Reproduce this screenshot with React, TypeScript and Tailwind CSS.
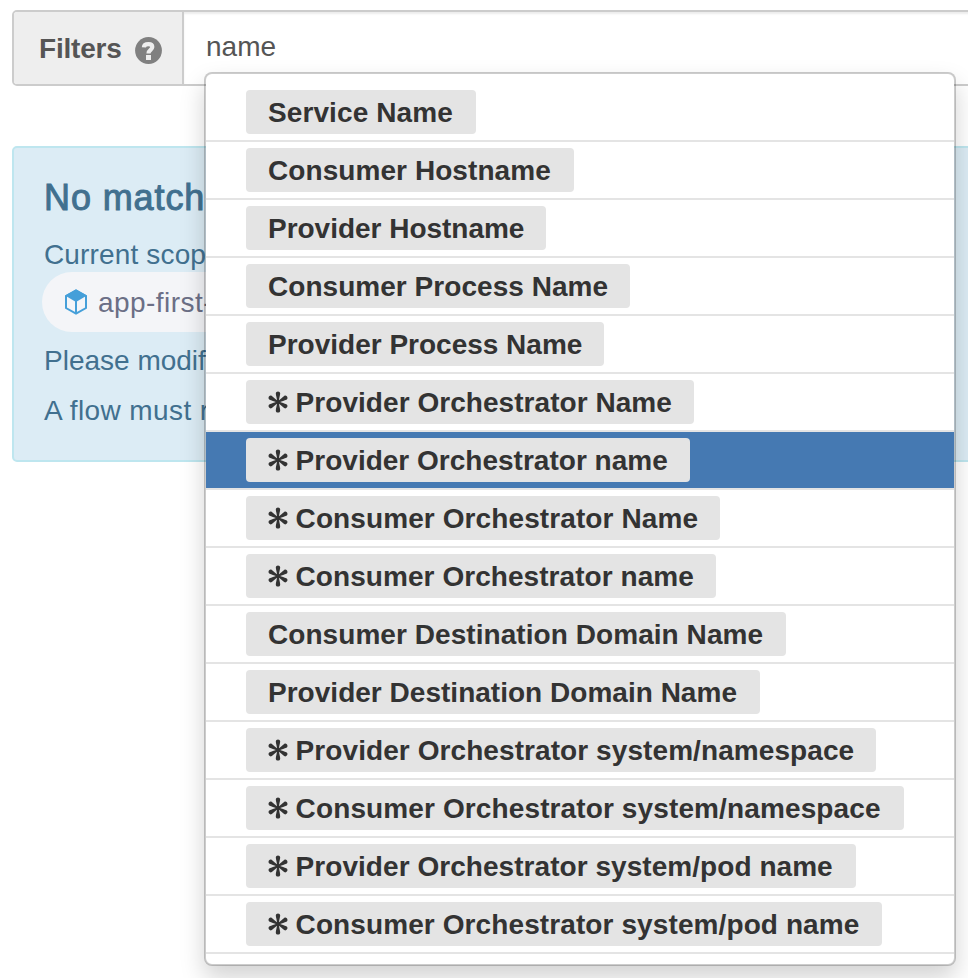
type Option = { label: string; starred?: boolean; active?: boolean; size: string };

const options: Option[] = [
  { label: 'Service Name', size: 'w-[230px] tracking-[0.1px]' },
  { label: 'Consumer Hostname', size: 'w-[328px] tracking-[0.07px]' },
  { label: 'Provider Hostname', size: 'w-[300px] tracking-[-0.02px]' },
  { label: 'Consumer Process Name', size: 'w-[384px] tracking-[0.04px]' },
  { label: 'Provider Process Name', size: 'w-[358px] tracking-[0px]' },
  { label: 'Provider Orchestrator Name', starred: true, size: 'w-[448px] tracking-[0.05px]' },
  { label: 'Provider Orchestrator name', starred: true, active: true, size: 'w-[444px] tracking-[0.01px]' },
  { label: 'Consumer Orchestrator Name', starred: true, size: 'w-[474px] tracking-[0.1px]' },
  { label: 'Consumer Orchestrator name', starred: true, size: 'w-[470px] tracking-[0.06px]' },
  { label: 'Consumer Destination Domain Name', size: 'w-[540px] tracking-[0.06px]' },
  { label: 'Provider Destination Domain Name', size: 'w-[514px] tracking-[0.02px]' },
  { label: 'Provider Orchestrator system/namespace', starred: true, size: 'w-[630px] tracking-[0.08px]' },
  { label: 'Consumer Orchestrator system/namespace', starred: true, size: 'w-[658px] tracking-[0.12px]' },
  { label: 'Provider Orchestrator system/pod name', starred: true, size: 'w-[610px] tracking-[0.05px]' },
  { label: 'Consumer Orchestrator system/pod name', starred: true, size: 'w-[636px] tracking-[0.1px]' },
];

function Asterisk() {
  return (
    <svg className="-mt-[2px] mr-[7.6px] h-[22px] w-5 shrink-0" viewBox="0 0 20 22" fill="#333">
      {[0, 60, 120, 180, 240, 300].map((angle) => (
        <path
          key={angle}
          transform={`rotate(${angle} 10 11)`}
          d="M9.1 11.4 C9.1 7 7.8 4.5 7.8 2.6 C7.8 -.3 12.2 -.3 12.2 2.6 C12.2 4.5 10.9 7 10.9 11.4 Z"
        />
      ))}
    </svg>
  );
}

function HelpIcon() {
  return (
    <svg className="ml-[12px] mt-[4px] size-[27px]" viewBox="0 0 27 27">
      <circle cx="13.5" cy="13.5" r="13.4" fill="#808080" />
      <path
        d="M8.9 10.4 C9 7.7 10.9 7.2 13.5 7.2 C16.2 7.2 17.3 8.2 17.3 10 C17.3 12.9 13.5 12.7 13.5 16.4"
        fill="none"
        stroke="#eee"
        strokeWidth="4.2"
      />
      <rect x="11" y="18" width="5" height="5" fill="#eee" />
    </svg>
  );
}

function Cube() {
  return (
    <svg className="mr-[10px] h-[26px] w-6 shrink-0" viewBox="0 0 24 26" fill="none">
      <path d="M12 1.4 L22 7 V19 L12 24.6 L2 19 V7 Z" stroke="#459fd9" strokeWidth="2" />
      <path d="M12 .5 L23 6.6 L12 13 L1 6.6 Z" fill="#459fd9" />
      <path d="M12 12 V25" stroke="#459fd9" strokeWidth="2" />
    </svg>
  );
}

export default function App() {
  return (
    <div className="relative h-[978px] w-[968px] overflow-hidden bg-white pl-3 pt-[10px] font-['Liberation_Sans',Arial,sans-serif] text-[28px]">
      <div className="flex h-[76px] w-[1000px] rounded-[5px] border-2 border-[#ccc]">
        <div className="flex w-[170px] items-center rounded-l-[3px] border-r-2 border-[#ccc] bg-[#eee] pl-[25px] font-bold text-[#555]">
          <span className="mt-[2px] w-[84px] tracking-[-0.2px]">Filters</span>
          <HelpIcon />
        </div>
        <div className="flex-1 pl-[22px] pt-[15px] leading-[40px] text-[#555] shadow-[inset_0_2px_2px_rgba(0,0,0,0.075)]">
          name
        </div>
      </div>

      <div className="mt-[60px] h-[316px] w-[1000px] whitespace-nowrap rounded-[5px] border-2 border-[#bee6ef] bg-[#dcecf5] pl-[30px] text-[#41708f]">
        <h4 className="mt-[30px] text-[36px] font-normal leading-[40px] tracking-[0.9px] [-webkit-text-stroke:1px_#41708f]">
          No match
        </h4>
        <p className="mt-[17px] h-[37px] leading-[40px] tracking-[0.15px]">Current scop</p>
        <div className="-ml-[2px] flex h-[60px] w-[420px] items-center rounded-full bg-[#f4f5f8] pl-[22px] text-[#6b6f86]">
          <Cube />
          <span className="mt-[2px] tracking-[0.45px]">app-first-</span>
        </div>
        <p className="mt-[9px] leading-[40px]">Please modif</p>
        <p className="mt-[10px] leading-[40px] tracking-[0.4px]">A flow must r</p>
      </div>

      <ul className="absolute left-[204px] top-[72px] w-[752px] rounded-[8px] border-2 border-black/20 bg-white bg-clip-padding py-[10px] shadow-[0_12px_24px_rgba(0,0,0,0.175)]">
        {options.map(({ label, starred, active, size }) => (
          <li
            key={label}
            className={`h-[58px] border-b-2 border-[#e4e4e4] pl-10 pt-[6px] ${active ? 'bg-[#4579b2]' : ''}`}
          >
            <span
              className={`flex h-11 items-center whitespace-pre rounded-[4px] bg-[#e4e4e4] pl-[22px] pt-[2px] font-bold text-[#333] ${size}`}
            >
              {starred && <Asterisk />}
              {label}
            </span>
          </li>
        ))}
      </ul>
    </div>
  );
}
